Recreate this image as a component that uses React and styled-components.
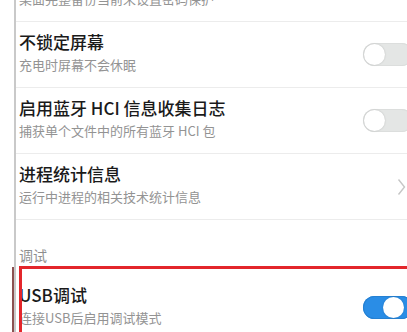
import styled, { createGlobalStyle } from "styled-components";

const GlobalStyle = createGlobalStyle`
  html, body {
    margin: 0;
    padding: 0;
    background: #ffffff;
    overflow: hidden;
  }
  body {
    font-family: "Noto Sans CJK SC", "Noto Sans", "Liberation Sans", sans-serif;
    width: 407px;
    height: 332px;
  }
`;

const settings = [
  { title: "桌面备份密码", desc: "桌面完整备份当前未设置密码保护", kind: "chevron" },
  { title: "不锁定屏幕", desc: "充电时屏幕不会休眠", kind: "toggle", on: false },
  { title: "启用蓝牙 HCI 信息收集日志", desc: "捕获单个文件中的所有蓝牙 HCI 包", kind: "toggle", on: false },
  { title: "进程统计信息", desc: "运行中进程的相关技术统计信息", kind: "chevron" },
];

export default function App() {
  return (
    <Screen>
      <GlobalStyle />
      <Page>
        {settings.map((s) => (
          <SettingRow key={s.title} {...s} />
        ))}
        <SectionHeader>调试</SectionHeader>
        <SettingRow title="USB调试" desc="连接USB后启用调试模式" kind="toggle" on plain />
      </Page>
      <EdgeMark />
      <Highlight />
    </Screen>
  );
}

function SettingRow({ title, desc, kind, on, plain }) {
  return (
    <Row $plain={plain}>
      <TextBlock>
        <Title>{title}</Title>
        <Desc>{desc}</Desc>
      </TextBlock>
      {kind === "toggle" ? (
        <Toggle $on={on}>
          <Knob $on={on} />
        </Toggle>
      ) : (
        <Chevron width="9" height="18" viewBox="0 0 9 18">
          <path d="M1.5 1.5 L7.5 9 L1.5 16.5" fill="none" stroke="#c6c6c6" strokeWidth="1.4" />
        </Chevron>
      )}
    </Row>
  );
}

const Screen = styled.div`
  position: relative;
  width: 407px;
  height: 332px;
  overflow: hidden;
`;

const Page = styled.div`
  margin: -44px 0 0 14px;
  width: 397px;
  border-left: 2px solid #c9c9c9;
  min-height: 400px;
`;

const Row = styled.div`
  display: flex;
  align-items: center;
  justify-content: space-between;
  height: 65px;
  padding: 0 0 0 3px;
  border-bottom: ${(p) => (p.$plain ? "none" : "1px solid #ececec")};
`;

const TextBlock = styled.div`
  display: flex;
  flex-direction: column;
  gap: 3px;
  padding-bottom: 5px;
`;

const Title = styled.div`
  font-size: 17px;
  line-height: 22px;
  font-weight: 500;
  color: #1a1a1a;
  white-space: nowrap;
`;

const Desc = styled.div`
  font-size: 13px;
  line-height: 18px;
  color: #939393;
  white-space: nowrap;
`;

const Toggle = styled.div`
  position: relative;
  flex: none;
  width: 50px;
  height: 23px;
  border-radius: 12px;
  background: ${(p) => (p.$on ? "#2a8de6" : "#e4e6e5")};
  box-shadow: inset 0 0 0 1px ${(p) => (p.$on ? "#2580d2" : "#dcdedd")};
`;

const Knob = styled.span`
  position: absolute;
  top: 1px;
  left: ${(p) => (p.$on ? "20px" : "1px")};
  width: 21px;
  height: 21px;
  border-radius: 50%;
  background: #ffffff;
  box-shadow: 0 0 2px rgba(0, 0, 0, 0.18);
`;

const Chevron = styled.svg`
  flex: none;
  margin-right: 7px;
`;

const SectionHeader = styled.div`
  padding: 26px 0 11px 3px;
  font-size: 14px;
  line-height: 18px;
  color: #8e8e8e;
`;

const Highlight = styled.div`
  position: absolute;
  left: 19px;
  top: 266px;
  width: 420px;
  height: 120px;
  border: 3px solid #e3262b;
  pointer-events: none;
`;

const EdgeMark = styled.div`
  position: absolute;
  left: 12px;
  top: 267px;
  width: 2px;
  height: 70px;
  background: #8b5252;
`;
